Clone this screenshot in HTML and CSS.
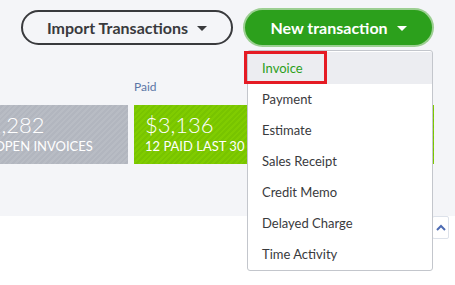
FILE: index.html
```html
<!DOCTYPE html>
<html>
	<head>
		<meta charset="UTF-8">
		<title>Invoices</title>
		<link rel="stylesheet" href="styles.css">
	</head>
	<body>
		<div class="summary">
			<div class="actions">
				<button class="btn btn-outline">Import Transactions <span class="caret"></span></button>
				<div class="new-wrap">
					<button class="btn btn-green">New transaction <span class="caret caret-white"></span></button>
					<ul class="menu">
						<li class="active">Invoice<span class="mark"></span></li>
						<li>Payment</li>
						<li>Estimate</li>
						<li>Sales Receipt</li>
						<li>Credit Memo</li>
						<li>Delayed Charge</li>
						<li>Time Activity</li>
					</ul>
				</div>
			</div>
			<div class="stats">
				<div class="stat stat-open">
					<div class="stat-label">&nbsp;</div>
					<div class="card card-gray">
						<div class="amount">$1,282</div>
						<div class="caption">14 OPEN INVOICES</div>
					</div>
				</div>
				<div class="stat">
					<div class="stat-label">Paid</div>
					<div class="card card-green">
						<div class="amount">$3,136</div>
						<div class="caption">12 PAID LAST 30 DAYS</div>
					</div>
				</div>
			</div>
		</div>
		<div class="bottom">
			<span class="to-top">
				<svg width="10" height="7" viewBox="0 0 10 7"><path d="M1 6 L5 2 L9 6" fill="none" stroke="#4d6bb3" stroke-width="2"/></svg>
			</span>
		</div>
	</body>
</html>
```
FILE: styles.css
```css
*{margin:0;padding:0;box-sizing:border-box;font-family:Lato,"Open Sans",sans-serif;}
ul{list-style:none;}
button{outline:none;cursor:pointer;}
html,body{
	height:100%;
	overflow:hidden;
	background:#fff;
}
.summary{
	height:216px;
	background:#f4f5f8;
	position:relative;
	z-index:2;
}
.actions{
	display:flex;
	padding:10px 0 0 21px;
	gap:12px;
}
.btn{
	height:35px;
	border-radius:18px;
	display:flex;
	align-items:center;
	justify-content:center;
	gap:9px;
	font-size:16px;
	font-weight:700;
}
.btn-outline{
	width:212px;
	border:2px solid #393a3d;
	background:transparent;
	color:#393a3d;
}
.btn-green{
	width:187px;
	border:0;
	background:#2ca01c;
	color:#fff;
	box-shadow:0 0 0 2px #9ccf92;
}
.caret{
	width:0;
	height:0;
	border-left:5px solid transparent;
	border-right:5px solid transparent;
	border-top:5px solid #393a3d;
	margin-top:1px;
}
.caret-white{border-top-color:#fff;}
.new-wrap{position:relative;}
.menu{
	position:absolute;
	top:40px;
	left:2px;
	width:186px;
	height:221px;
	background:#fff;
	border:1px solid #c3c6cc;
	border-radius:3px;
	z-index:5;
	padding-top:1px;
}
.menu li{
	position:relative;
	height:31px;
	line-height:31px;
	padding-left:14px;
	font-size:13px;
	color:#393a3d;
}
.menu li.active{
	height:32px;
	line-height:32px;
	background:#ecedf1;
	color:#2ca01c;
}
.mark{
	position:absolute;
	left:-4px;
	top:-1px;
	width:83px;
	height:33px;
	border:3px solid #e51b24;
}
.stats{
	display:flex;
	gap:6px;
	margin-top:34px;
}
.stat-open{margin-left:-35px;}
.stat-label{
	height:16px;
	line-height:16px;
	margin-bottom:10px;
	font-size:12px;
	color:#5b76a6;
}
.card{
	height:59px;
	padding:7px 11px 0;
	color:#fff;
	white-space:nowrap;
	overflow:hidden;
}
.card-gray{
	width:163px;
	background:repeating-linear-gradient(135deg,#b8bcc4 0,#b8bcc4 2px,#b2b6bf 2px,#b2b6bf 4px);
}
.card-green{
	width:300px;
	background:repeating-linear-gradient(135deg,#80cc00 0,#80cc00 2px,#78c400 2px,#78c400 4px);
}
.amount{
	font-size:22px;
	font-weight:300;
	line-height:26px;
}
.caption{
	font-size:13px;
	line-height:16px;
}
.bottom{
	position:relative;
}
.to-top{
	position:absolute;
	left:432px;
	top:0;
	width:17px;
	height:23px;
	border:1px solid #dde2ea;
	border-radius:2px;
	background:#fff;
	display:flex;
	align-items:center;
	justify-content:center;
}
```
